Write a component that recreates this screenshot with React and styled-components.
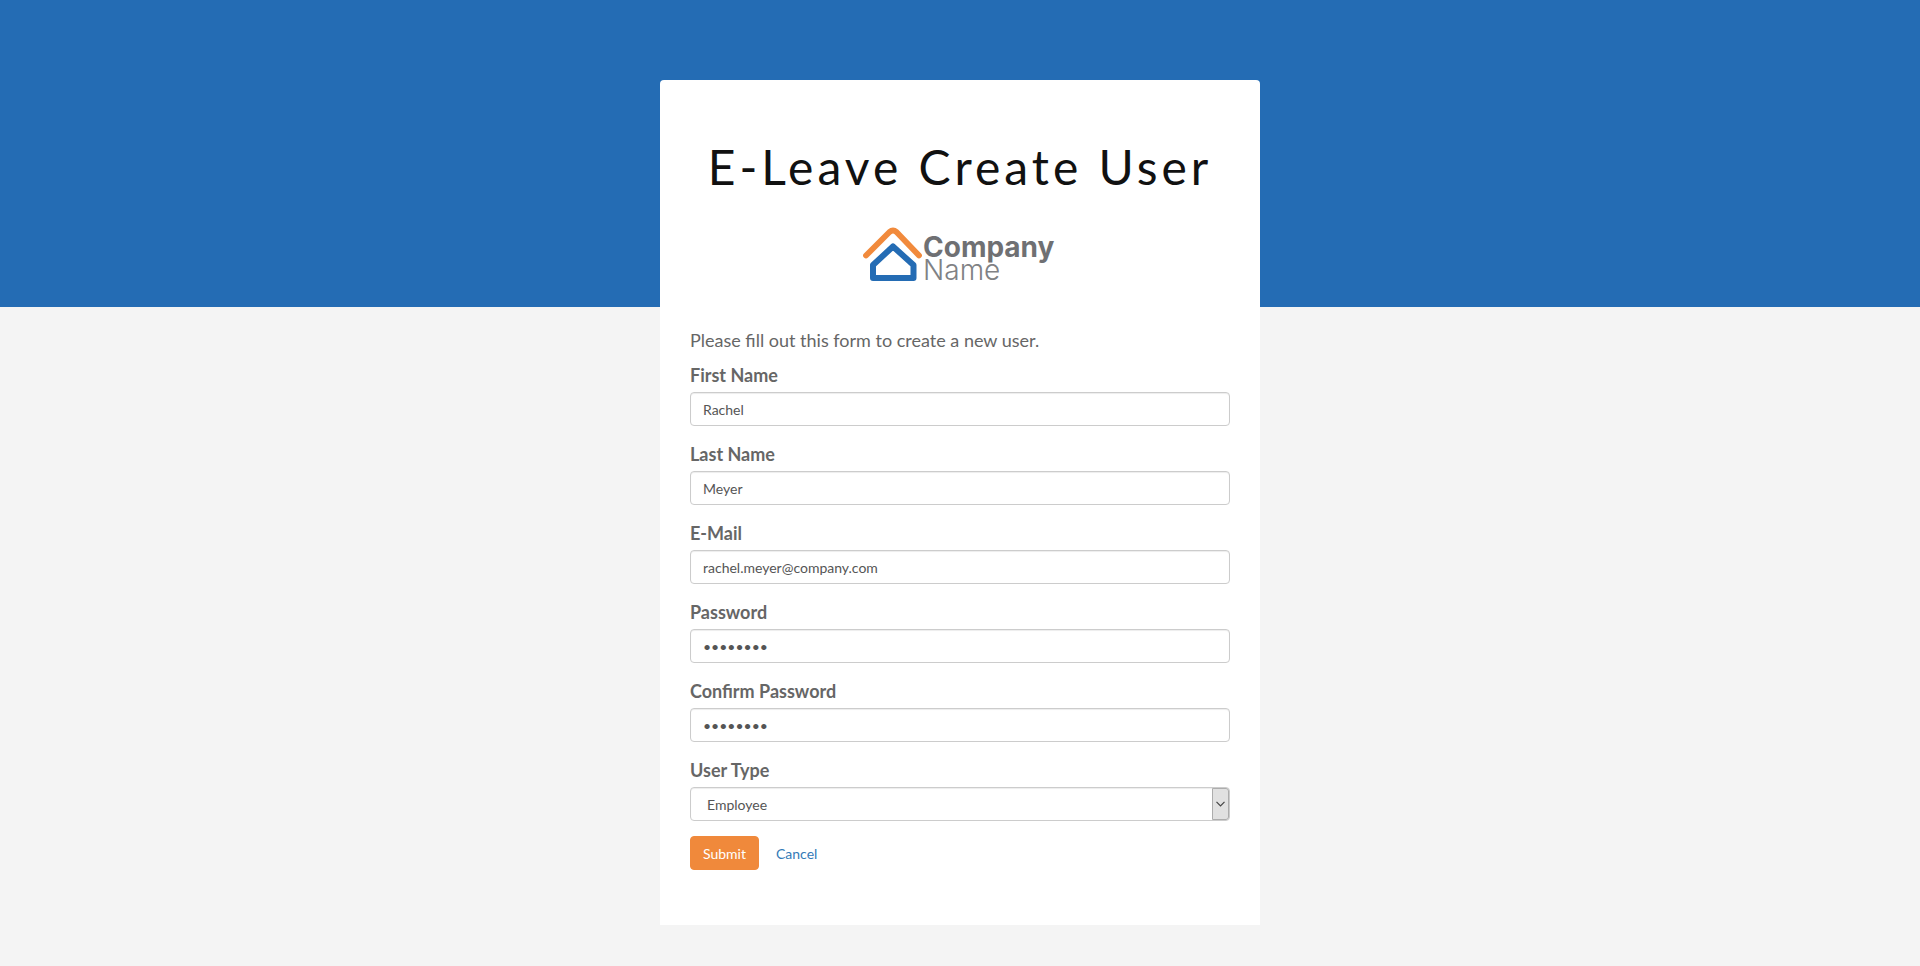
import React from 'react';
import styled, { createGlobalStyle } from 'styled-components';

const GlobalStyle = createGlobalStyle`
  *, *::before, *::after { box-sizing: border-box; }
  body {
    margin: 0;
    background: #f4f4f4;
    color: #666;
    font-family: Lato, "Liberation Sans", sans-serif;
    font-size: 18px;
    line-height: 26px;
  }
`;

const Page = styled.div`
  min-height: 100vh;
  padding: 80px 0 40px;
  background: linear-gradient(#246cb4, #246cb4) top / 100% 307px no-repeat;
`;

const Card = styled.main`
  max-width: 600px;
  margin: 0 auto;
  padding: 57px 30px 55px;
  background: #fff;
  border-radius: 4px 4px 0 0;
`;

const Title = styled.h1`
  margin: 0 0 28px;
  color: #111;
  font-size: 48px;
  font-weight: 400;
  line-height: 60px;
  letter-spacing: 4px;
  text-align: center;
  white-space: nowrap;
`;

const Logo = styled.svg`
  display: block;
  margin: 0 auto 32px;
`;

const Intro = styled.p`
  margin: 0 0 9px;
`;

const Field = styled.div`
  display: flex;
  flex-direction: column;
  gap: 3px;
  margin-bottom: 15px;
`;

const Label = styled.label`
  font-weight: 700;
  line-height: 27px;
`;

const Input = styled.input`
  width: 100%;
  height: 34px;
  padding: 6px 12px;
  color: #555;
  background: #fff;
  border: 1px solid #ccc;
  border-radius: 4px;
  box-shadow: inset 0 1px 1px rgba(0, 0, 0, 0.075);
  font: 14px/20px Lato, "Liberation Sans", sans-serif;
`;

const SelectFrame = styled.div`
  position: relative;
`;

const Select = styled(Input)`
  display: block;
  appearance: none;
  padding: 7px 16px 5px;
`;

const Arrow = styled.span`
  position: absolute;
  top: 1px;
  right: 1px;
  bottom: 1px;
  width: 17px;
  display: grid;
  place-items: center;
  background: #e1e1e1;
  border: 1px solid #adadad;
  border-radius: 0 3px 3px 0;
  pointer-events: none;
`;

const Actions = styled.div`
  display: flex;
  align-items: baseline;
  gap: 17px;
  font-size: 14px;
`;

const Submit = styled.button`
  height: 34px;
  padding: 7px 12px 5px;
  color: #fff;
  background: #f0893b;
  border: 1px solid #f0893b;
  border-radius: 4px;
  font: 14px/20px Lato, "Liberation Sans", sans-serif;
`;

const Cancel = styled.a`
  color: #337ab7;
  text-decoration: none;
`;

const fields = [
  { id: 'first', label: 'First Name', type: 'text', value: 'Rachel' },
  { id: 'last', label: 'Last Name', type: 'text', value: 'Meyer' },
  { id: 'email', label: 'E-Mail', type: 'email', value: 'rachel.meyer@company.com' },
  { id: 'password', label: 'Password', type: 'password', value: 'password' },
  { id: 'confirm', label: 'Confirm Password', type: 'password', value: 'password' },
];

export default function App() {
  return (
    <Page>
      <GlobalStyle />
      <Card>
        <Title>E-Leave Create User</Title>
        <Logo width="200" height="70" viewBox="0 0 200 70" role="img" aria-label="Company Name">
          <path d="M6 30.500L29.500 7Q33 4 36.500 7L59 30.500" fill="none" stroke="#f18a3c" strokeWidth="5.800" strokeLinecap="round" strokeLinejoin="round" />
          <path d="M33 21.500L53.500 40V53H13V40Z" fill="none" stroke="#246cb4" strokeWidth="6" strokeLinejoin="round" />
          <text x="63" y="32" fill="#6f7073" fontFamily="Inter, sans-serif" fontSize="28" fontWeight="700">Company</text>
          <text x="63" y="55" fill="#808184" fontFamily="Inter, sans-serif" fontSize="28" fontWeight="300">Name</text>
        </Logo>
        <Intro>Please fill out this form to create a new user.</Intro>
        <form onSubmit={(e) => e.preventDefault()}>
          {fields.map((f) => (
            <Field key={f.id}>
              <Label htmlFor={f.id}>{f.label}</Label>
              <Input id={f.id} type={f.type} defaultValue={f.value} />
            </Field>
          ))}
          <Field>
            <Label htmlFor="usertype">User Type</Label>
            <SelectFrame>
              <Select as="select" id="usertype" defaultValue="Employee">
                <option>Employee</option>
                <option>Manager</option>
              </Select>
              <Arrow>
                <svg width="9" height="6" viewBox="0 0 9 6" aria-hidden="true">
                  <path d="M0.500 0.800L4.500 4.800L8.500 0.800" fill="none" stroke="#444" strokeWidth="1.200" />
                </svg>
              </Arrow>
            </SelectFrame>
          </Field>
          <Actions>
            <Submit type="submit">Submit</Submit>
            <Cancel href="#cancel">Cancel</Cancel>
          </Actions>
        </form>
      </Card>
    </Page>
  );
}
